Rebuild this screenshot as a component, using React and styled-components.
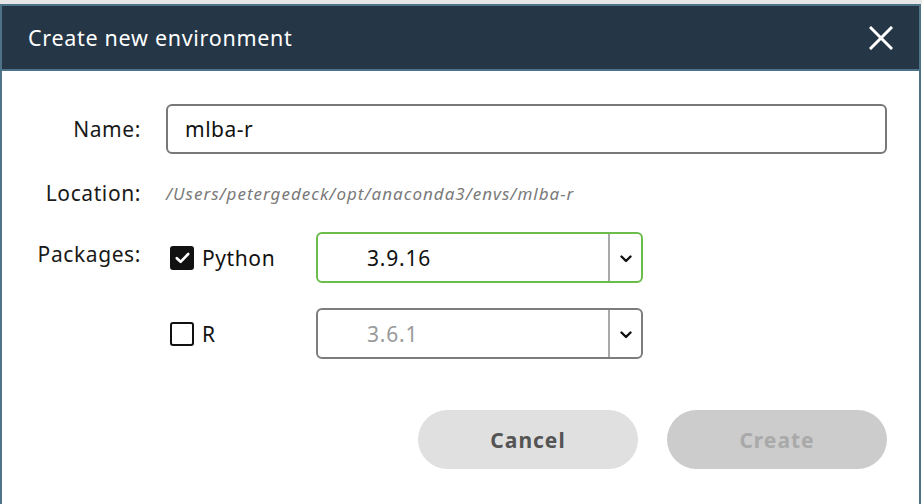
import styled, { createGlobalStyle } from "styled-components";

const GlobalStyle = createGlobalStyle`
  html, body {
    margin: 0;
    padding: 0;
    background: #ffffff;
  }
  body {
    font-family: "Noto Sans", "Open Sans", sans-serif;
  }
`;

function CloseIcon() {
  return (
    <svg width="24" height="24" viewBox="0 0 24 24">
      <path
        d="M2 2 L22 22 M22 2 L2 22"
        stroke="#ffffff"
        strokeWidth="3"
        strokeLinecap="square"
      />
    </svg>
  );
}

function Chevron() {
  return (
    <svg width="12" height="8" viewBox="0 0 12 8">
      <path
        d="M1.5 1.5 L6 6 L10.5 1.5"
        fill="none"
        stroke="#111"
        strokeWidth="2.4"
        strokeLinecap="round"
        strokeLinejoin="round"
      />
    </svg>
  );
}

function CheckMark() {
  return (
    <svg width="15" height="12" viewBox="0 0 15 12">
      <path
        d="M1.8 6.2 L5.6 9.8 L13.2 2"
        fill="none"
        stroke="#ffffff"
        strokeWidth="2.6"
        strokeLinecap="round"
        strokeLinejoin="round"
      />
    </svg>
  );
}

function Package({ name, version, checked }) {
  return (
    <PackageRow>
      <CheckLabel>
        <Box checked={checked}>{checked && <CheckMark />}</Box>
        <CheckText>{name}</CheckText>
      </CheckLabel>
      <Select active={checked}>
        <SelectValue active={checked}>{version}</SelectValue>
        <SelectArrow>
          <Chevron />
        </SelectArrow>
      </Select>
    </PackageRow>
  );
}

function App() {
  return (
    <Page>
      <GlobalStyle />
      <TopStrip />
      <Dialog>
        <Header>
          <Title>Create new environment</Title>
          <CloseButton>
            <CloseIcon />
          </CloseButton>
        </Header>
        <Body>
          <Form>
            <Label>Name:</Label>
            <NameInput>mlba-r</NameInput>

            <Label>Location:</Label>
            <Path>/Users/petergedeck/opt/anaconda3/envs/mlba-r</Path>

            <Label top>Packages:</Label>
            <Packages>
              <Package name="Python" version="3.9.16" checked />
              <Package name="R" version="3.6.1" />
            </Packages>
          </Form>
          <Buttons>
            <Button>Cancel</Button>
            <Button disabled>Create</Button>
          </Buttons>
        </Body>
      </Dialog>
    </Page>
  );
}

const Page = styled.div`
  width: 922px;
  height: 504px;
  overflow: hidden;
  background: #ffffff;
`;

const TopStrip = styled.div`
  height: 4px;
  background: #e6e6e6;
`;

const Dialog = styled.div`
  width: 917px;
  height: 520px;
  border: 2px solid #4e7389;
  border-bottom: none;
  background: #ffffff;
`;

const Header = styled.div`
  height: 63px;
  background: #253646;
  border-bottom: 2px solid #4e7389;
  display: flex;
  align-items: center;
  justify-content: space-between;
  padding: 0 26px 0 26px;
`;

const Title = styled.div`
  color: #ffffff;
  font-size: 21.5px;
  font-weight: 400;
  letter-spacing: 0.7px;
  padding-bottom: 1px;
`;

const CloseButton = styled.div`
  display: flex;
  width: 24px;
  height: 24px;
`;

const Body = styled.div`
  padding: 33px 32px 0 0;
`;

const Form = styled.div`
  display: grid;
  grid-template-columns: 139px 1fr;
  column-gap: 25px;
  row-gap: 14px;
  align-items: center;
`;

const Label = styled.div`
  text-align: right;
  font-size: 21px;
  letter-spacing: 0.6px;
  color: #1a1a1a;
  align-self: ${(p) => (p.top ? "start" : "center")};
  padding-top: ${(p) => (p.top ? "8px" : "0")};
`;

const NameInput = styled.div`
  height: 46px;
  border: 2px solid #787878;
  border-radius: 6px;
  display: flex;
  align-items: center;
  padding-left: 17px;
  font-size: 21px;
  letter-spacing: 0.5px;
  color: #111;
`;

const Path = styled.div`
  height: 50px;
  display: flex;
  align-items: center;
  font-size: 17px;
  font-style: italic;
  letter-spacing: 1px;
  color: #7a7a7a;
  white-space: nowrap;
`;

const Packages = styled.div`
  display: flex;
  flex-direction: column;
  gap: 25px;
`;

const PackageRow = styled.div`
  display: flex;
  align-items: center;
`;

const CheckLabel = styled.div`
  width: 150px;
  display: flex;
  align-items: center;
  padding-left: 4px;
  padding-top: 1px;
  box-sizing: border-box;
`;

const Box = styled.div`
  width: 24px;
  height: 24px;
  box-sizing: border-box;
  border-radius: 3px;
  background: ${(p) => (p.checked ? "#111" : "#fff")};
  border: 2px solid #111;
  display: flex;
  align-items: center;
  justify-content: center;
`;

const CheckText = styled.div`
  margin-left: 8px;
  font-size: 21px;
  letter-spacing: 0.6px;
  color: #111;
`;

const Select = styled.div`
  width: 327px;
  height: 51px;
  box-sizing: border-box;
  border: 2px solid ${(p) => (p.active ? "#6abd4b" : "#7d7d7d")};
  border-radius: 6px;
  display: flex;
`;

const SelectValue = styled.div`
  flex: 1;
  display: flex;
  align-items: center;
  padding-left: 49px;
  font-size: 21px;
  letter-spacing: 0.8px;
  color: ${(p) => (p.active ? "#111" : "#9a9a9a")};
  border-right: 2px solid #a9a9a9;
`;

const SelectArrow = styled.div`
  width: 31px;
  display: flex;
  align-items: center;
  justify-content: center;
  padding-top: 2px;
`;

const Buttons = styled.div`
  display: flex;
  justify-content: flex-end;
  gap: 29px;
  margin-top: 51px;
`;

const Button = styled.div`
  width: 220px;
  height: 59px;
  border-radius: 30px;
  display: flex;
  align-items: center;
  justify-content: center;
  font-size: 21px;
  font-weight: 700;
  letter-spacing: 1px;
  background: ${(p) => (p.disabled ? "#cccccc" : "#e0e0e0")};
  color: ${(p) => (p.disabled ? "#a9a9a9" : "#545454")};
`;

export default App;
